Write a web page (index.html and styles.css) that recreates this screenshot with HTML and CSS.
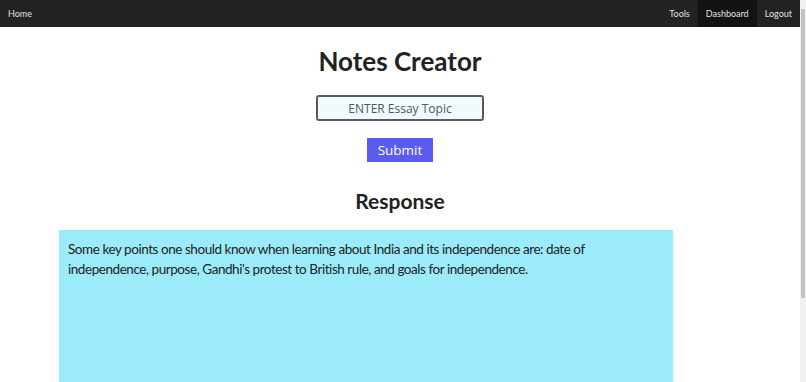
FILE: index.html
```html
<!DOCTYPE html>
<html lang="en">
<head>
<meta charset="utf-8">
<title>Notes Creator</title>
<link rel="stylesheet" href="styles.css">
</head>
<body>
<div class="page">
  <nav class="topnav">
    <a class="nav-link" href="#">Home</a>
    <div class="nav-right">
      <a class="nav-link" href="#">Tools</a>
      <a class="nav-link active" href="#">Dashboard</a>
      <a class="nav-link" href="#">Logout</a>
    </div>
  </nav>
  <main class="content">
    <h1 class="title">Notes Creator</h1>
    <form class="topic-form">
      <input class="topic-input" type="text" placeholder="ENTER Essay Topic">
      <button class="submit-btn" type="button">Submit</button>
    </form>
    <h2 class="response-title">Response</h2>
    <div class="response-box">
      <p class="response-text">Some key points one should know when learning about India and its independence are: date of independence, purpose, Gandhi's protest to British rule, and goals for independence.</p>
    </div>
  </main>
</div>
<div class="fake-scrollbar"><div class="fake-thumb"></div></div>
</body>
</html>
```
FILE: styles.css
```css
html, body {
  height: 100%;
  overflow: hidden;
}

body {
  margin: 0;
  display: flex;
  background: #ffffff;
  font-family: "Open Sans", "Liberation Sans", sans-serif;
  color: #222222;
}

.page {
  flex: 1;
  min-width: 0;
}

.fake-scrollbar {
  width: 6px;
  flex: none;
  background: #f1f1f1;
  display: flex;
  flex-direction: column;
  padding: 9px 1px 0;
  box-sizing: border-box;
}

.fake-thumb {
  height: 289px;
  background: #c1c1c1;
}

.topnav {
  display: flex;
  justify-content: space-between;
  align-items: stretch;
  height: 27px;
  background: #222222;
}

.nav-right {
  display: flex;
}

.nav-link {
  display: flex;
  align-items: center;
  padding: 0 8px;
  color: #e0e0e0;
  text-decoration: none;
  font-family: "Lato", "Open Sans", sans-serif;
  font-size: 9px;
}

.nav-link.active {
  background: #121212;
}

.content {
  display: flex;
  flex-direction: column;
  align-items: center;
}

.title {
  margin: 16px 0 0;
  font-family: "Lato", "Open Sans", sans-serif;
  font-size: 26px;
  line-height: 36px;
  font-weight: 700;
  color: #222222;
}

.topic-form {
  display: flex;
  flex-direction: column;
  align-items: center;
  margin-top: 16px;
}

.topic-input {
  box-sizing: border-box;
  width: 168px;
  height: 26px;
  border: 2px solid #5a5a5a;
  border-radius: 3px;
  background: #f0fbff;
  text-align: center;
  font-family: "Open Sans", "Liberation Sans", sans-serif;
  font-size: 12px;
  color: #333;
  outline: none;
}

.topic-input::placeholder {
  color: #555555;
}

.submit-btn {
  margin-top: 17px;
  width: 66px;
  height: 24px;
  border: none;
  background: #5b5bf0;
  color: #ffffff;
  font-family: "Open Sans", "Liberation Sans", sans-serif;
  font-size: 13.5px;
  padding: 0;
}

.response-title {
  margin: 24px 0 0;
  font-family: "Lato", "Open Sans", sans-serif;
  font-size: 21px;
  line-height: 30px;
  font-weight: 700;
}

.response-box {
  align-self: flex-start;
  box-sizing: border-box;
  margin: 14px 0 0 59px;
  width: 614px;
  min-height: 270px;
  background: #9bebfb;
  padding: 9px 9px;
}

.response-text {
  margin: 0;
  font-family: "Lato", "Open Sans", sans-serif;
  font-size: 13.5px;
  letter-spacing: -0.45px;
  line-height: 20px;
  color: #222222;
}
```
